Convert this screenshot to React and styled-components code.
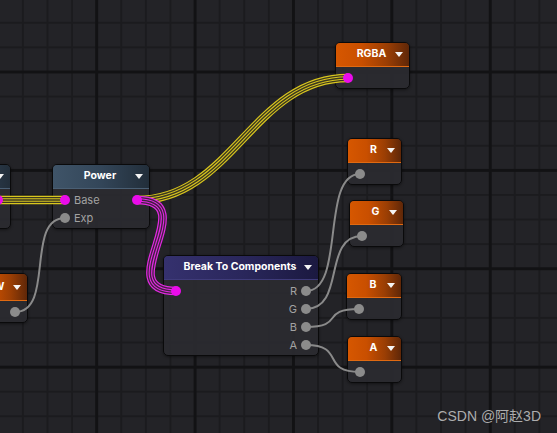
import React from "react";
import styled, { createGlobalStyle } from "styled-components";

const GlobalStyle = createGlobalStyle`
  html, body { margin: 0; padding: 0; background: #232327; }
  body { width: 557px; height: 433px; overflow: hidden; font-family: Inter, "Noto Sans", sans-serif; }
`;

const Canvas = styled.div`
  position: relative;
  width: 557px;
  height: 433px;
  overflow: hidden;
  background-color: #232327;
  background-image:
    linear-gradient(to bottom, #121214 3px, transparent 3px),
    linear-gradient(to right, #121214 3px, transparent 3px),
    linear-gradient(to bottom, #1b1b1e 2px, transparent 2px),
    linear-gradient(to right, #1b1b1e 2px, transparent 2px);
  background-size: 98.4px 98.4px, 98.4px 98.4px, 24.6px 24.6px, 24.6px 24.6px;
  background-position: 0 70.5px, 95.2px 0, 0 21.8px, 21.9px 0;
`;

const tones = {
  orange: {
    bg: "linear-gradient(90deg, #d65700 0%, #c94f00 35%, #9a3e04 70%, #5f2708 100%)",
    line: "#e06a12",
  },
  steel: {
    bg: "linear-gradient(90deg, #3f5468 0%, #334659 50%, #222e3a 100%)",
    line: "#4a5f74",
  },
  indigo: {
    bg: "linear-gradient(90deg, #35316e 0%, #2a275c 50%, #1b1940 100%)",
    line: "#3f3b7a",
  },
};

const NodeBox = styled.div`
  position: absolute;
  left: ${(p) => p.$x}px;
  top: ${(p) => p.$y}px;
  width: ${(p) => p.$w}px;
  box-sizing: border-box;
  border: 1px solid #0a0a0b;
  border-radius: 5px;
  background: rgba(43, 43, 48, 0.94);
  box-shadow: 0 1px 3px rgba(0, 0, 0, 0.45);
`;

const Header = styled.div`
  height: ${(p) => p.$h}px;
  box-sizing: border-box;
  display: grid;
  grid-template-columns: 1fr auto 1fr;
  align-items: center;
  padding: 0 6px 0 4px;
  border-radius: 4px 4px 0 0;
  background: ${(p) => tones[p.$tone].bg};
  border-bottom: 1px solid ${(p) => tones[p.$tone].line};
`;

const Title = styled.span`
  grid-column: 2;
  color: #ffffff;
  font-family: Inter, "Noto Sans", sans-serif;
  font-weight: 700;
  font-size: 10.5px;
  line-height: 1;
  white-space: nowrap;
`;

const Caret = styled.span`
  grid-column: 3;
  justify-self: end;
  width: 0;
  height: 0;
  border-left: 4px solid transparent;
  border-right: 4px solid transparent;
  border-top: 5px solid #f4f4f4;
`;

const Body = styled.div`
  padding: 2px 0 1px;
`;

const Row = styled.div`
  height: 18px;
  display: flex;
  align-items: center;
  justify-content: space-between;
  padding: 0 7px;
`;

const Port = styled.div`
  display: flex;
  align-items: center;
  gap: 4px;
`;

const Pin = styled.span`
  position: relative;
  z-index: 2;
  width: 10px;
  height: 10px;
  border-radius: 50%;
  background: ${(p) => (p.$kind === "m" ? "#ea0cea" : "#8b8b8b")};
`;

const Label = styled.span`
  font-family: Inter, "Noto Sans", sans-serif;
  font-size: 11px;
  line-height: 1;
  color: #a2a2a2;
`;

const WireLayer = styled.svg`
  position: absolute;
  left: 0;
  top: 0;
  z-index: 1;
  pointer-events: none;
  overflow: visible;
`;

const Watermark = styled.div`
  position: absolute;
  right: 16px;
  bottom: 8px;
  z-index: 3;
  font-family: "Liberation Sans", "Noto Sans CJK SC", sans-serif;
  font-size: 14px;
  color: #bdbdbd;
  opacity: 0.9;
`;

const nodes = [
  { id: "in", x: -69, y: 164, w: 80, tone: "steel", title: "", rows: [{ outPin: "m" }, {}] },
  { id: "w", x: -28, y: 273, w: 56, tone: "orange", title: "W", headerH: 27, rows: [{ outPin: "g" }] },
  {
    id: "power", x: 52, y: 164, w: 98, tone: "steel", title: "Power",
    rows: [
      { inPin: "m", inLabel: "Base", outPin: "m" },
      { inPin: "g", inLabel: "Exp" },
    ],
  },
  { id: "rgba", x: 335, y: 42, w: 75, tone: "orange", title: "RGBA", rows: [{ inPin: "m" }] },
  {
    id: "break", x: 163, y: 255, w: 156, tone: "indigo", title: "Break To Components",
    rows: [
      { inPin: "m", outLabel: "R", outPin: "g" },
      { outLabel: "G", outPin: "g" },
      { outLabel: "B", outPin: "g" },
      { outLabel: "A", outPin: "g" },
    ],
  },
  { id: "r", x: 347, y: 138, w: 55, tone: "orange", title: "R", rows: [{ inPin: "g" }] },
  { id: "g", x: 349, y: 200, w: 55, tone: "orange", title: "G", rows: [{ inPin: "g" }] },
  { id: "b", x: 346, y: 273, w: 56, tone: "orange", title: "B", rows: [{ inPin: "g" }] },
  { id: "a", x: 347, y: 336, w: 55, tone: "orange", title: "A", rows: [{ inPin: "g" }] },
];

const bez = (x1, y1, x2, y2, d) =>
  `M${x1} ${y1} C${x1 + d} ${y1} ${x2 - d} ${y2} ${x2} ${y2}`;

function Bundle({ d, color, gap }) {
  return (
    <g fill="none" strokeLinecap="butt">
      <path d={d} stroke={color} strokeWidth="8.6" />
      <path d={d} stroke={gap} strokeWidth="6.2" />
      <path d={d} stroke={color} strokeWidth="3.6" />
      <path d={d} stroke={gap} strokeWidth="1.4" />
    </g>
  );
}

const grayWires = [
  [15, 312, 65, 218],
  [306, 291, 360, 174],
  [306, 309, 362, 236],
  [306, 327, 359, 309],
  [306, 345, 360, 372],
];

function Node({ n }) {
  return (
    <NodeBox $x={n.x} $y={n.y} $w={n.w}>
      <Header $tone={n.tone} $h={n.headerH || 24}>
        {n.title ? <Title>{n.title}</Title> : <span />}
        <Caret />
      </Header>
      <Body>
        {n.rows.map((r, i) => (
          <Row key={i}>
            <Port>
              {r.inPin && <Pin $kind={r.inPin} />}
              {r.inLabel && <Label>{r.inLabel}</Label>}
            </Port>
            <Port>
              {r.outLabel && <Label>{r.outLabel}</Label>}
              {r.outPin && <Pin $kind={r.outPin} />}
            </Port>
          </Row>
        ))}
      </Body>
    </NodeBox>
  );
}

export default function App() {
  return (
    <>
      <GlobalStyle />
      <Canvas>
        {nodes.map((n) => (
          <Node key={n.id} n={n} />
        ))}
        <WireLayer width="557" height="433" viewBox="0 0 557 433">
          <Bundle d="M-4 200 L65 200" color="#d9c61e" gap="#3b3820" />
          <Bundle d={bez(137, 200, 348, 78, 95)} color="#d9c61e" gap="#3b3820" />
          <Bundle d={bez(137, 200, 176, 291, 68)} color="#e22ae2" gap="#40203f" />
          {grayWires.map(([a, b, c, e], i) => (
            <path key={i} d={bez(a, b, c, e, 40)} fill="none" stroke="#8a8a8a" strokeWidth="2" />
          ))}
        </WireLayer>
        <Watermark>CSDN @阿赵3D</Watermark>
      </Canvas>
    </>
  );
}
